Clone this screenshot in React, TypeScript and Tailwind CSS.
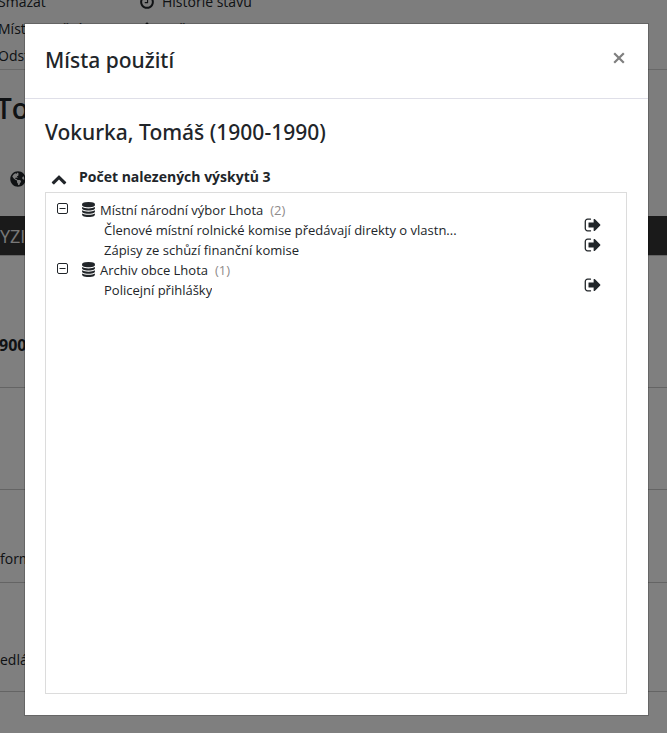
import React, { useState } from "react";
import { FaGlobeAmericas } from "react-icons/fa";

interface IconProps {
  className?: string;
}

interface Usage {
  id: number;
  label: string;
}

interface UsageGroup {
  id: number;
  name: string;
  items: Usage[];
}

const groups: UsageGroup[] = [
  {
    id: 1,
    name: "Místní národní výbor Lhota",
    items: [
      {
        id: 11,
        label: "Členové místní rolnické komise předávají direkty o vlastn...",
      },
      { id: 12, label: "Zápisy ze schůzí finanční komise" },
    ],
  },
  {
    id: 2,
    name: "Archiv obce Lhota",
    items: [{ id: 21, label: "Policejní přihlášky" }],
  },
];

const App = () => {
  return (
    <div className="relative h-screen overflow-hidden bg-white font-['Open_Sans',sans-serif] text-[#212529]">
      <RecordPage />
      <div className="fixed inset-0 flex bg-black/50 pt-[23px] pr-[18px] pb-[17px] pl-6">
        <UsageDialog />
      </div>
    </div>
  );
};

export default App;

const UsageDialog = () => {
  const [open, setOpen] = useState(true);
  const total = groups.reduce((sum, g) => sum + g.items.length, 0);

  return (
    <section
      role="dialog"
      aria-labelledby="dialog-title"
      className="flex min-w-0 flex-1 flex-col border border-black/20 bg-white bg-clip-padding"
    >
      <header className="flex items-center justify-between border-b border-[#dfdfe8] px-5 pt-[21px] pb-[23px]">
        <h4
          id="dialog-title"
          className="font-['Noto_Sans',sans-serif] text-[21px] leading-[30px] font-medium"
        >
          Místa použití
        </h4>
        <button type="button" aria-label="Zavřít" className="mb-1 p-[3px] text-[#7f7f7f]">
          <CloseIcon className="size-3" />
        </button>
      </header>

      <div className="flex min-h-0 flex-1 flex-col px-5 pt-[18px] pb-[21px]">
        <h4 className="font-['Noto_Sans',sans-serif] text-[21px] leading-[30px] font-medium">
          Vokurka, Tomáš (1900-1990)
        </h4>
        <button
          type="button"
          aria-expanded={open}
          onClick={() => setOpen(!open)}
          className="mt-[18px] mb-1 flex h-[23px] items-center gap-3 pl-1.5 text-left text-sm font-bold"
        >
          <ChevronUpIcon className="mt-1 size-4 shrink-0" />
          Počet nalezených výskytů {total}
        </button>
        {open && (
          <ul className="mr-px flex-1 overflow-auto border border-[#dcdcdc] pt-[7px] text-[13px] leading-5">
            {groups.map((group) => (
              <UsageTreeGroup key={group.id} group={group} />
            ))}
          </ul>
        )}
      </div>
    </section>
  );
};

const UsageTreeGroup = ({ group }: { group: UsageGroup }) => {
  const [expanded, setExpanded] = useState(true);

  return (
    <li>
      <div className="flex h-5 items-center pl-[11px]">
        <button
          type="button"
          aria-label={group.name}
          aria-expanded={expanded}
          onClick={() => setExpanded(!expanded)}
          className="mr-3"
        >
          <ToggleIcon className="-mt-0.5 size-3" expanded={expanded} />
        </button>
        <DatabaseIcon className="-mt-0.5 mr-1 size-[15px]" />
        <span>{group.name}</span>
        <span className="ml-[7px] text-[#8f8b8b]">({group.items.length})</span>
      </div>
      {expanded && (
        <ul>
          {group.items.map((item) => (
            <li
              key={item.id}
              className="flex h-5 items-center justify-between pr-6 pl-[58px]"
            >
              <span className="truncate">{item.label}</span>
              <button type="button" aria-label={`Otevřít ${item.label}`}>
                <SignOutIcon className="-mt-2.5 size-[18px]" />
              </button>
            </li>
          ))}
        </ul>
      )}
    </li>
  );
};

/* record detail under the dialog */
const RecordPage = () => {
  return (
    <main className="text-sm">
      <div className="-mt-3 -ml-0.5 grid grid-cols-[141px_1fr] grid-rows-3 border-b border-[#d0d0d0] bg-[#fafafa] leading-[27px]">
        <a href="#smazat">Smazat</a>
        <a href="#historie" className="flex items-center gap-[7px]">
          <ClockIcon className="size-4" />
          Historie stavu
        </a>
        <a href="#mista">Místa použití</a>
        <a href="#export" className="flex items-center gap-[7px]">
          <SignOutIcon className="size-4 -rotate-90" />
          Zpět
        </a>
        <a href="#odstranit">Odstranit</a>
      </div>
      <div className="h-[146px] bg-[#fafafa] pt-5">
        <h1 className="-ml-1 text-[28px] leading-9 font-semibold">Tomáš</h1>
        <FaGlobeAmericas className="mt-[45px] ml-2.5 size-4" />
      </div>
      <div className="flex h-10 items-center border-b border-[#c8c8c8] bg-[#343434] text-lg text-[#f0f0f0]">
        YZICKÁ OSOBA
      </div>
      <div className="-ml-px h-[132px] border-b border-[#c8c8c8] pt-[77px] text-base leading-6 font-bold">
        900-1990
      </div>
      <div className="h-[102px] border-b border-[#c8c8c8]" />
      <div className="h-[93px] border-b border-[#c8c8c8] pt-[59px] leading-5">
        formace
      </div>
      <div className="h-[109px] border-b border-[#c8c8c8] pt-[67px] leading-5">
        edlák
      </div>
    </main>
  );
};

const CloseIcon = ({ className }: IconProps) => (
  <svg
    viewBox="0 0 12 12"
    className={className}
    fill="none"
    stroke="currentColor"
    strokeWidth="2.2"
  >
    <path d="M1.2 1.2l9.6 9.6M10.8 1.2l-9.6 9.6" />
  </svg>
);

const ToggleIcon = ({ className, expanded }: IconProps & { expanded: boolean }) => (
  <svg viewBox="0 0 12 12" className={className} fill="none" stroke="currentColor">
    <rect x="0.5" y="0.5" width="10" height="10" rx="1.5" />
    <path d={expanded ? "M2.5 5.5h6" : "M2.5 5.5h6M5.5 2.5v6"} />
  </svg>
);

const ChevronUpIcon = ({ className }: IconProps) => (
  <svg viewBox="0 0 1792 1792" className={className} fill="currentColor">
    <path d="M1683 1331l-166 165q-19 19-45 19t-45-19l-531-531-531 531q-19 19-45 19t-45-19l-166-165q-19-19-19-45.5t19-45.5l742-741q19-19 45-19t45 19l742 741q19 19 19 45.5t-19 45.5z" />
  </svg>
);

const DatabaseIcon = ({ className }: IconProps) => (
  <svg viewBox="0 0 1792 1792" className={className} fill="currentColor">
    <path d="M896 768q237 0 443-43t325-127v170q0 69-103 128t-280 93.5-385 34.5-385-34.5-280-93.5-103-128v-170q119 84 325 127t443 43zm0 768q237 0 443-43t325-127v170q0 69-103 128t-280 93.5-385 34.5-385-34.5-280-93.5-103-128v-170q119 84 325 127t443 43zm0-384q237 0 443-43t325-127v170q0 69-103 128t-280 93.5-385 34.5-385-34.5-280-93.5-103-128v-170q119 84 325 127t443 43zm0-1152q208 0 385 34.5t280 93.5 103 128v128q0 69-103 128t-280 93.5-385 34.5-385-34.5-280-93.5-103-128v-128q0-69 103-128t280-93.5 385-34.5z" />
  </svg>
);

const SignOutIcon = ({ className }: IconProps) => (
  <svg viewBox="0 0 1792 1792" className={className} fill="currentColor">
    <path d="M704 1440q0 4 1 20t.5 26.5-3 23.5-10 19.5-20.5 6.5h-320q-119 0-203.5-84.5t-84.5-203.5v-704q0-119 84.5-203.5t203.5-84.5h320q13 0 22.5 9.5t9.5 22.5q0 4 1 20t.5 26.5-3 23.5-10 19.5-20.5 6.5h-320q-66 0-113 47t-47 113v704q0 66 47 113t113 47h312l11.5 1 11.5 3 8 5.5 7 9 2 13.5zm928-544q0 26-19 45l-544 544q-19 19-45 19t-45-19-19-45v-288h-448q-26 0-45-19t-19-45v-384q0-26 19-45t45-19h448v-288q0-26 19-45t45-19 45 19l544 544q19 19 19 45z" />
  </svg>
);

const ClockIcon = ({ className }: IconProps) => (
  <svg viewBox="0 0 1792 1792" className={className} fill="currentColor">
    <path d="M1024 544v448q0 14-9 23t-23 9h-320q-14 0-23-9t-9-23v-64q0-14 9-23t23-9h224v-352q0-14 9-23t23-9h64q14 0 23 9t9 23zm416 352q0-148-73-273t-198-198-273-73-273 73-198 198-73 273 73 273 198 198 273 73 273-73 198-198 73-273zm224 0q0 209-103 385.5t-279.5 279.5-385.5 103-385.5-103-279.5-279.5-103-385.5 103-385.5 279.5-279.5 385.5-103 385.5 103 279.5 279.5 103 385.5z" />
  </svg>
);
